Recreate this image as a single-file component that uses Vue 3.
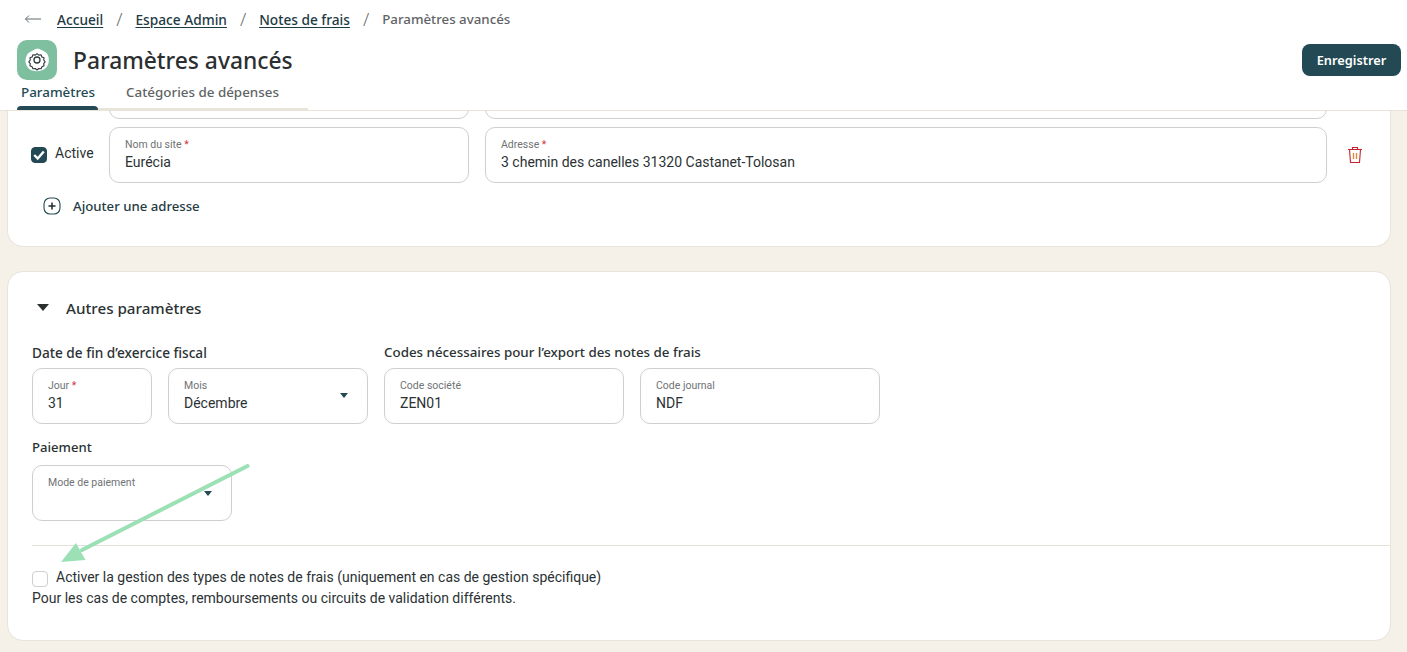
<script setup>
const topFields = [
  { label: 'Nom du site', value: 'Eurécia', cls: 'site' },
  { label: 'Adresse', value: '3 chemin des canelles 31320 Castanet-Tolosan', cls: 'addr' }
]
const crumbs = ['Accueil', 'Espace Admin', 'Notes de frais']
</script>

<template>
  <div class="page">
    <header class="head">
      <nav class="crumbs">
        <svg class="back" width="18" height="10" viewBox="0 0 18 10"><path d="M17 5H1.5M5 1.5 1.5 5 5 8.5" fill="none" stroke="#5f6b6e" stroke-width="1"/></svg>
        <template v-for="c in crumbs" :key="c">
          <a class="crumb">{{ c }}</a>
          <span class="sep">/</span>
        </template>
        <span class="current">Paramètres avancés</span>
      </nav>
      <div class="title-row">
        <div class="logo">
          <svg width="40" height="40" viewBox="0 0 40 40">
            <path d="M20 8.500c3 0 4 1.500 6.500 2.500 2.500 1.200 4.500 3 5 6 .5 2.500.5 5 -.5 7.500-1 3-3.500 5-6.500 6-3 1-6.500 1-9.500 0-3-1-5-3.500-6-6.500-.8-2.500-.6-5 .3-7.500 1-2.800 3-4.500 5.500-5.500 2-.8 3.500-2.500 6.200-2.500z" fill="#fff"/>
            <path transform="translate(20 20) scale(.88) translate(-20 -20)" d="M20 12.800l2 1.700 2.600-.4 1 2.400 2.400 1-.4 2.500 1.700 2-1.700 2 .4 2.600-2.400 1-1 2.400-2.600-.4-2 1.700-2-1.700-2.600.4-1-2.400-2.400-1 .4-2.600-1.700-2 1.700-2-.4-2.500 2.400-1 1-2.400 2.600.4z" fill="none" stroke="#2f3a3c" stroke-width="1.300" stroke-linejoin="round"/>
            <circle cx="20" cy="20" r="3" fill="none" stroke="#2f3a3c" stroke-width="1.300"/>
          </svg>
        </div>
        <h1 class="title">Paramètres avancés</h1>
        <button class="save">Enregistrer</button>
      </div>
      <div class="tabs">
        <div class="tab active">Paramètres</div>
        <div class="tab">Catégories de dépenses</div>
      </div>
    </header>

    <main class="content">
      <section class="card first">
        <div class="address-row ghost">
          <div class="field site"></div>
          <div class="field addr"></div>
        </div>
        <div class="address-row">
          <label class="check-wrap">
            <span class="box on">
              <svg width="16" height="16" viewBox="0 0 16 16"><path d="M3.200 8 6.700 11.500 12.800 4.500" fill="none" stroke="#fff" stroke-width="2.400"/></svg>
            </span>
            <span class="check-text">Active</span>
          </label>
          <div v-for="f in topFields" :key="f.label" class="field" :class="f.cls">
            <span class="lab">{{ f.label }} <i>*</i></span>
            <span class="val">{{ f.value }}</span>
          </div>
          <svg class="trash" width="16" height="18" viewBox="0 0 16 18">
            <path d="M1 3.500h14M5.500 3.500V1.500h5v2M2.500 3.500l1 13h9l1-13" fill="none" stroke="#c8232c" stroke-width="1.100"/>
            <path d="M6.500 7v6M9.500 7v6" stroke="#e08a3c" stroke-width="1.400"/>
          </svg>
        </div>
        <div class="add">
          <svg width="18" height="18" viewBox="0 0 18 18">
            <rect x="1" y="1" width="16" height="16" rx="6" fill="none" stroke="#234a54" stroke-width="1.100"/>
            <path d="M5.500 9h7M9 5.500v7" stroke="#1f2b2e" stroke-width="1.500"/>
          </svg>
          <span>Ajouter une adresse</span>
        </div>
      </section>

      <section class="card second">
        <div class="section-title">
          <span class="caret big"></span>
          <span>Autres paramètres</span>
        </div>
        <div class="groups">
          <div class="group">
            <h3 class="wide">Date de fin d’exercice fiscal</h3>
            <div class="fields">
              <div class="field w120"><span class="lab">Jour <i>*</i></span><span class="val">31</span></div>
              <div class="field w200 sel"><span class="lab">Mois</span><span class="val">Décembre</span><span class="caret small"></span></div>
            </div>
          </div>
          <div class="group">
            <h3>Codes nécessaires pour l’export des notes de frais</h3>
            <div class="fields">
              <div class="field w240"><span class="lab">Code société</span><span class="val">ZEN01</span></div>
              <div class="field w240"><span class="lab">Code journal</span><span class="val">NDF</span></div>
            </div>
          </div>
        </div>
        <h3 class="pay">Paiement</h3>
        <div class="field w200 sel"><span class="lab">Mode de paiement</span><span class="val">&nbsp;</span><span class="caret small up"></span></div>
        <hr class="rule" />
        <div class="opt">
          <span class="box low"></span>
          <span>Activer la gestion des types de notes de frais (uniquement en cas de gestion spécifique)</span>
        </div>
        <p class="hint">Pour les cas de comptes, remboursements ou circuits de validation différents.</p>
      </section>
    </main>

    <svg class="arrow" width="200" height="110" viewBox="0 0 200 110">
      <path d="M187.500 6 22 90" stroke="#9ce0b5" stroke-width="4" stroke-linecap="round" fill="none"/>
      <path d="M1 102 16 83 25.500 100z" fill="#9ce0b5"/>
    </svg>
  </div>
</template>

<style>
html, body { margin: 0; background: #f5f0e8; }
</style>

<style scoped>
.page { position: relative; width: 1407px; height: 652px; overflow: hidden; background: #f5f0e8; font-family: Roboto, sans-serif; color: #2b3234; box-sizing: border-box; }
.head { height: 110px; background: #fff; border-bottom: 1px solid #e8e4da; position: relative; z-index: 1; padding: 0 6px 0 17px; display: flex; flex-direction: column; }
.crumbs { height: 38px; display: flex; align-items: center; padding-left: 7px; font: 500 13.700px "Noto Sans", sans-serif; }
.back { margin-right: 15px; }
.crumb { color: #1e3a44; text-decoration: underline; text-underline-offset: 2px; }
.sep { color: #6a6f70; margin: 0 13px; font-size: 18px; font-weight: 300; line-height: 20px; }
.current { color: #5f6466; font-size: 13.300px; }
.title-row { height: 44px; display: flex; align-items: center; }
.logo { width: 40px; height: 40px; background: #7dbf9e; border-radius: 10px; flex: none; }
.title { margin: 0 0 0 16px; font: 500 22.800px "Noto Sans", sans-serif; color: #2b2f30; flex: 1; }
.save { width: 99px; height: 32px; border: 0; border-radius: 8px; background: #234a54; color: #fff; font: 600 12.800px "Noto Sans", sans-serif; padding: 0; }
.tabs { display: flex; height: 29px; width: 291px; border-bottom: 2px solid #e8e4da; box-sizing: border-box; position: absolute; top: 81px; left: 17px; }
.tab { font: 500 13.400px "Noto Sans", sans-serif; color: #5f6466; padding: 2px 0 0; margin-left: 28px; white-space: nowrap; position: relative; }
.tab.active { color: #234a54; margin-left: 4px; width: 77px; }
.tab.active::after { content: ""; position: absolute; left: -4px; right: 0; bottom: -2px; height: 4px; background: #234a54; border-radius: 4px 4px 0 0; }

.content { padding: 0 16px 0 7px; display: flex; flex-direction: column; gap: 24px; height: 541px; overflow: hidden; }
.card { background: #fff; border: 1px solid #e8e4da; border-radius: 16px; box-sizing: border-box; flex: none; }
.first { border-top: 0; padding: 0 0 0 23px; margin-top: -48px; height: 184px; }
.ghost { height: 56px; margin-bottom: 8px; padding-left: 78px; }
.address-row { display: flex; gap: 16px; align-items: center; position: relative; }
.check-wrap { width: 62px; display: flex; align-items: center; gap: 8px; font-size: 14px; white-space: nowrap; color: #2b3234; }
.check-text { padding-bottom: 4px; }
.box { width: 16px; height: 16px; border: 1px solid #cfcfcf; border-radius: 4px; box-sizing: border-box; flex: none; display: block; background: #fff; }
.box.on { background: #234a54; border-color: #234a54; }
.box.on svg { display: block; margin: -1px; }
.box.low { position: relative; top: 2px; }
.field { width: 360px; height: 56px; box-sizing: border-box; border: 1px solid #cfcfcf; border-radius: 10px; background: #fff; padding: 10px 15px 0; position: relative; display: flex; flex-direction: column; }
.field.site { width: 360px; }
.field.addr { width: 842px; }
.w120 { width: 120px; }
.w200 { width: 200px; }
.w240 { width: 240px; }
.lab { font-size: 10.500px; line-height: 14px; color: #6f7375; white-space: nowrap; }
.lab i { color: #d32f3c; font-style: normal; }
.val { font-size: 14px; line-height: 20px; color: #2b3234; white-space: nowrap; }
.trash { margin-left: 4px; }
.add { display: flex; align-items: center; gap: 12px; margin: 14px 0 0 12px; font: 500 13.200px "Noto Sans", sans-serif; color: #263b42; }
.second { height: 370px; padding: 0 0 0 24px; }
.section-title { display: flex; align-items: center; gap: 17px; height: 71px; padding-left: 5px; font: 500 15.200px "Noto Sans", sans-serif; color: #2b3234; }
.caret { width: 0; height: 0; border-left: 6.500px solid transparent; border-right: 6.500px solid transparent; border-top: 7px solid #2b2f30; display: block; }
.small { position: absolute; right: 19px; top: 24px; border-left-width: 4.500px; border-right-width: 4.500px; border-top: 5px solid #234a54; }
.small.up { top: 25px; }
.groups { display: flex; gap: 16px; margin-top: 1px; }
.group { display: flex; flex-direction: column; }
h3 { margin: 0 0 8px; font: 500 13.350px/17px "Noto Sans", sans-serif; color: #2b3234; height: 16px; white-space: nowrap; }
h3.wide { font-size: 13.650px; }
.fields { display: flex; gap: 16px; }
.pay { margin-top: 15px; margin-bottom: 10px; font-size: 13.100px; }
.rule { border: 0; height: 1px; background: #e4e1d8; margin: 24px 0 0; }
.opt { display: flex; gap: 8px; align-items: center; margin-top: 22px; font-size: 14px; line-height: 18px; }
.hint { margin: 3px 0 0; font-size: 14px; line-height: 18px; color: #2b3234; }
.arrow { position: absolute; left: 60px; top: 460px; z-index: 2; pointer-events: none; }
</style>
